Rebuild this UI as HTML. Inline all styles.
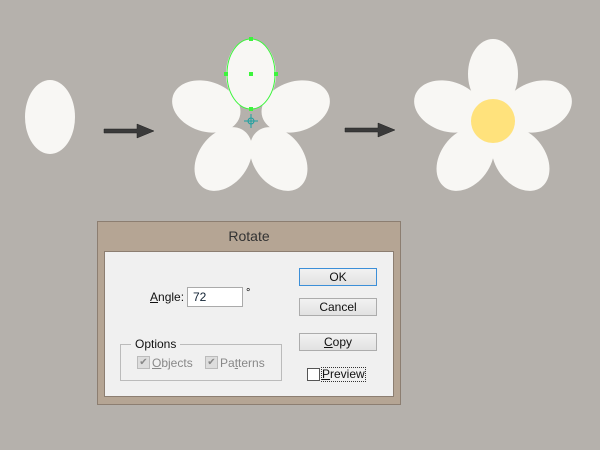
<!DOCTYPE html>
<html><head><style>
body{margin:0;width:600px;height:450px;background:#b5b1ac;position:relative;overflow:hidden;font-family:"Liberation Sans",sans-serif;}
.a{position:absolute;}
.btn{position:absolute;left:299px;width:76px;height:16px;background:linear-gradient(#f2f2f2,#e2e2e2);border:1px solid #acacac;font-size:12px;text-align:center;line-height:16px;color:#111;}
</style></head><body>
<svg class="a" style="left:0;top:0" width="600" height="220">
<defs>
<g id="pet"><ellipse cx="0" cy="-47" rx="25" ry="35" fill="#f8f7f4"/></g>
</defs>
<ellipse cx="50" cy="117" rx="25" ry="37" fill="#f8f7f4"/>
<g transform="translate(251,121)">
<use href="#pet" transform="rotate(72)"/><use href="#pet" transform="rotate(144)"/><use href="#pet" transform="rotate(216)"/><use href="#pet" transform="rotate(288)"/>
<use href="#pet"/>
<ellipse cx="0" cy="-47" rx="24" ry="35" fill="none" stroke="#3cf53c" stroke-width="1"/>
<g fill="#3cf53c"><rect x="-2" y="-84" width="4" height="4"/><rect x="-2" y="-49" width="4" height="4"/><rect x="-2" y="-14" width="4" height="4"/><rect x="-27" y="-49" width="4" height="4"/><rect x="23" y="-49" width="4" height="4"/></g>
<g stroke="#1aa0a0" fill="none" stroke-width="1"><circle r="3"/><path d="M-7 0H7M0 -7V7"/></g>
</g>
<g transform="translate(493,121)">
<use href="#pet"/><use href="#pet" transform="rotate(72)"/><use href="#pet" transform="rotate(144)"/><use href="#pet" transform="rotate(216)"/><use href="#pet" transform="rotate(288)"/>
<circle r="22" fill="#ffe27c"/>
</g>
<g fill="#3a3a3a" stroke="#222" stroke-width="0.5">
<path d="M104 129h33v-5l17 7-17 7v-5h-33z"/>
<path d="M345 128h33v-5l17 7-17 7v-5h-33z"/>
</g>
</svg>
<div class="a" style="left:97px;top:221px;width:302px;height:182px;background:#b5a594;border:1px solid #8c7e71;"></div>
<div class="a" style="left:97px;top:228px;width:304px;text-align:center;font-size:14px;color:#333;">Rotate</div>
<div class="a" style="left:104px;top:251px;width:288px;height:144px;background:#f0f0f0;border:1px solid #8c7e71;"></div>
<div class="a" style="left:150px;top:290px;font-size:12px;color:#111;"><u>A</u>ngle:</div>
<div class="a" style="left:187px;top:287px;width:54px;height:18px;background:#fff;border:1px solid #aaa;font-size:12px;line-height:18px;text-indent:5px;color:#123;">72</div>
<div class="a" style="left:246px;top:287px;font-size:11px;">°</div>
<div class="btn" style="top:268px;border-color:#3c8fd8;">OK</div>
<div class="btn" style="top:298px;">Cancel</div>
<div class="btn" style="top:333px;"><u>C</u>opy</div>
<div class="a" style="left:120px;top:344px;width:160px;height:35px;border:1px solid #bbb;"></div>
<div class="a" style="left:131px;top:337px;background:#f0f0f0;padding:0 4px;font-size:12px;color:#111;">Options</div>
<div class="a" style="left:137px;top:356px;width:11px;height:11px;background:#ddd;border:1px solid #bbb;font-size:10px;line-height:11px;color:#888;text-align:center;">✔</div>
<div class="a" style="left:152px;top:356px;font-size:12px;color:#888;"><u>O</u>bjects</div>
<div class="a" style="left:205px;top:356px;width:11px;height:11px;background:#ddd;border:1px solid #bbb;font-size:10px;line-height:11px;color:#888;text-align:center;">✔</div>
<div class="a" style="left:220px;top:356px;font-size:12px;color:#888;">Pa<u>t</u>terns</div>
<div class="a" style="left:307px;top:368px;width:11px;height:11px;background:#fff;border:1px solid #555;"></div>
<div class="a" style="left:321px;top:367px;font-size:12px;color:#111;border:1px dotted #333;line-height:13px;"><u>P</u>review</div>
</body></html>
